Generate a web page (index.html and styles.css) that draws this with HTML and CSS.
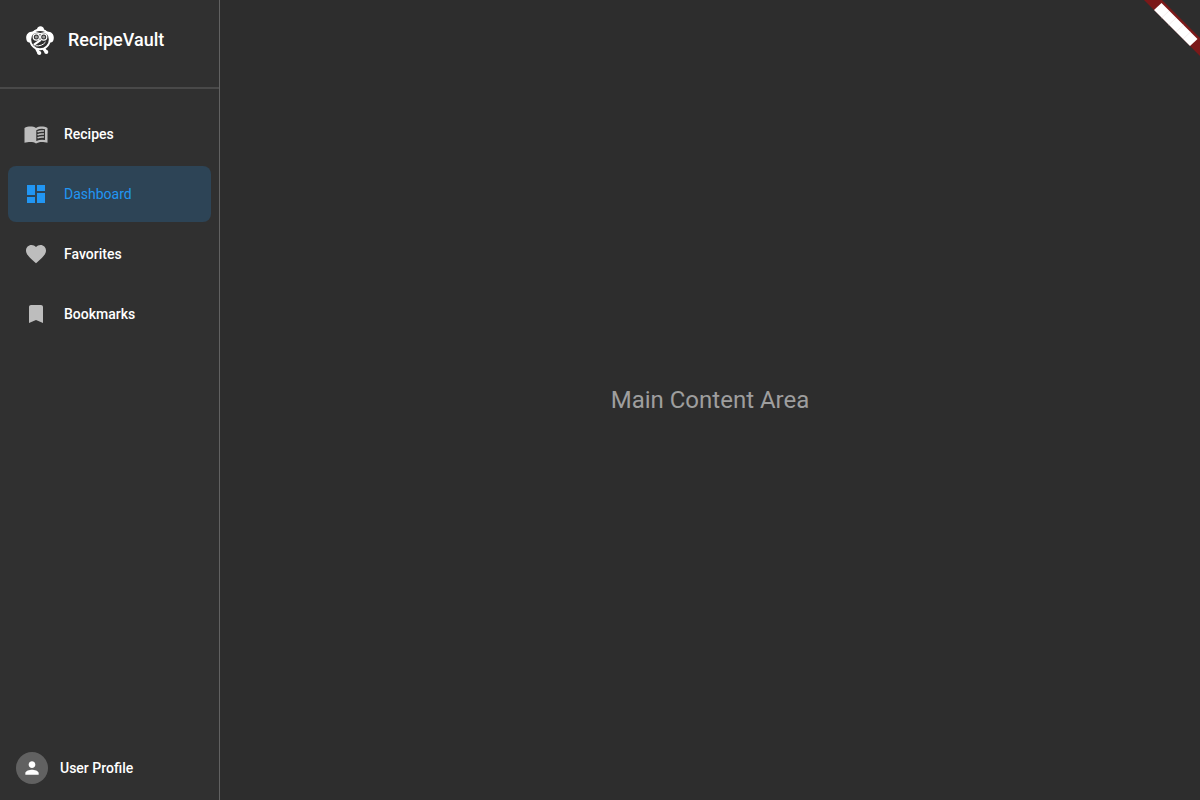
FILE: index.html
```html
<!DOCTYPE html>
<html lang="en">
<head>
<meta charset="utf-8">
<title>RecipeVault</title>
<link rel="stylesheet" href="styles.css">
</head>
<body>
<div class="app">
  <aside class="sidebar">
    <header class="brand">
      <svg class="brand-logo" viewBox="0 0 40 40" aria-hidden="true">
        <path d="M17 10C16.500 5 24.500 5 24 10L28.500 13.500H11.500z" fill="#fff"/>
        <path d="M14 11.500C9 11 6 14 6.200 18C6.400 22 8.500 23.500 12 22zM26 11.500C31 11 34 14 33.800 18C33.600 22 31.500 23.500 28 22z" fill="#fff"/>
        <circle cx="20" cy="19.500" r="9.800" fill="#303030" stroke="#fff" stroke-width="1.900"/>
        <path d="M11.500 14.500C13 10.500 16 9 20 9S27 10.500 28.500 14.500L24 13L20 14.500L16 13z" fill="#fff"/>
        <path d="M15.500 11.900Q20 10.300 25 11.900L20.300 13z" fill="#303030"/>
        <circle cx="16.300" cy="17" r="3.100" fill="#303030" stroke="#fff" stroke-width="1.200"/>
        <circle cx="23.700" cy="17" r="3.100" fill="#303030" stroke="#fff" stroke-width="1.200"/>
        <circle cx="16.300" cy="17" r="1.500" fill="#999"/>
        <circle cx="23.700" cy="17" r="1.500" fill="#999"/>
        <path d="M13.800 24.800L20.800 19.800" fill="none" stroke="#fff" stroke-width="2.200"/>
        <path d="M15.500 25.800Q22 26.500 25.500 22" fill="none" stroke="#fff" stroke-width="1"/>
        <path d="M16.500 28.500L19 33.200M23.500 28.500L26.500 32.300" stroke="#fff" stroke-width="3"/>
        <circle cx="19.300" cy="33" r="2" fill="#fff"/>
        <circle cx="26.300" cy="32" r="2" fill="#fff"/>
      </svg>
      <span class="brand-name">RecipeVault</span>
    </header>
    <nav class="nav">
      <a class="nav-item" href="#recipes">
        <svg class="icon" viewBox="0 0 24 24" aria-hidden="true">
          <path d="M12 6C10.550 4.900 8.450 4.500 6.500 4.500S2 4.900.5 6v14.800C2 20.300 4.500 20 6.500 20c1.950 0 4.050.4 5.500 1.500 1.350-.85 3.800-1.500 5.500-1.500 2 0 4.500.3 6 .8V6C22 4.900 19.450 4.500 17.500 4.500S13.450 4.900 12 6z"/>
          <path class="icon-page" d="M12.300 8.200Q16.500 6.200 21 7.200V18Q16.500 17 12.300 19z"/>
          <path class="icon-lines" d="M13.500 9.900Q16.500 8.500 20 9.100M13.500 12.900Q16.500 11.500 20 12.100M13.500 15.900Q16.500 14.500 20 15.100"/>
        </svg>
        <span>Recipes</span>
      </a>
      <a class="nav-item active" href="#dashboard" aria-current="page">
        <svg class="icon" viewBox="0 0 24 24" aria-hidden="true"><path d="M3 13h8V3H3v10zm0 8h8v-6H3v6zm10 0h8V11h-8v10zm0-18v6h8V3h-8z"/></svg>
        <span>Dashboard</span>
      </a>
      <a class="nav-item" href="#favorites">
        <svg class="icon" viewBox="0 0 24 24" aria-hidden="true"><path d="M12 21.350l-1.450-1.320C5.400 15.360 2 12.280 2 8.500 2 5.420 4.420 3 7.500 3c1.740 0 3.410.81 4.500 2.090C13.090 3.810 14.760 3 16.500 3 19.580 3 22 5.420 22 8.500c0 3.780-3.400 6.860-8.550 11.540L12 21.350z"/></svg>
        <span>Favorites</span>
      </a>
      <a class="nav-item" href="#bookmarks">
        <svg class="icon" viewBox="0 0 24 24" aria-hidden="true"><path d="M17 3H7c-1.100 0-1.990.9-1.990 2L5 21l7-3 7 3V5c0-1.100-.9-2-2-2z"/></svg>
        <span>Bookmarks</span>
      </a>
    </nav>
    <footer class="profile">
      <span class="avatar">
        <svg class="avatar-icon" viewBox="0 0 24 24" aria-hidden="true"><path d="M12 12c2.210 0 4-1.790 4-4s-1.790-4-4-4-4 1.790-4 4 1.790 4 4 4zm0 2c-2.670 0-8 1.340-8 4v2h16v-2c0-2.660-5.330-4-8-4z"/></svg>
      </span>
      <span>User Profile</span>
    </footer>
  </aside>
  <main class="content"><p class="placeholder">Main Content Area</p></main>
  <svg class="ribbon" viewBox="0 0 60 60" aria-hidden="true">
    <path d="M4 0H22L60 38V56z" fill="#7b1919"/>
    <path d="M21.500 3L57.500 39L50 46L14 10z" fill="#fff"/>
    <path d="M21.500 18L29 11M28.500 25L36 18M36 32L43.500 25M43 39L50.500 32" stroke="#eadede" stroke-width=".5"/>
  </svg>
</div>
</body>
</html>
```

FILE: styles.css
```css
* {
  box-sizing: border-box;
}

body {
  margin: 0;
  background: #2d2d2d;
  color: #fff;
  font-family: Roboto, "Liberation Sans", sans-serif;
}

.app {
  position: relative;
  display: flex;
  min-height: 100vh;
  overflow: hidden;
}

.sidebar {
  display: flex;
  flex-direction: column;
  flex: 0 0 220px;
  background: #303030;
  border-right: 1px solid #616161;
}

.brand {
  display: flex;
  align-items: center;
  gap: 8px;
  padding: 20px 20px 27px;
  border-bottom: 2px solid #494949;
}

.brand-logo {
  width: 40px;
  height: 40px;
}

.brand-name {
  font-size: 18px;
  font-weight: 500;
  line-height: 20px;
}

.nav {
  display: flex;
  flex: 1;
  flex-direction: column;
  gap: 4px;
  padding: 17px 8px;
}

.nav-item {
  display: flex;
  align-items: center;
  gap: 16px;
  min-height: 56px;
  padding: 0 16px;
  border-radius: 8px;
  color: #fff;
  font-size: 14px;
  font-weight: 500;
  text-decoration: none;
}

.icon {
  width: 24px;
  height: 24px;
  fill: #bdbdbd;
}

.icon .icon-page {
  fill: #303030;
}

.icon .icon-lines {
  fill: none;
  stroke: #bdbdbd;
  stroke-width: 1.5;
}

.active {
  background: #2d4456;
  color: #2196f3;
  font-weight: 400;
}

.active .icon {
  fill: #2196f3;
}

.profile {
  display: flex;
  align-items: center;
  gap: 12px;
  padding: 16px;
  font-size: 14px;
  font-weight: 500;
}

.avatar {
  display: grid;
  place-items: center;
  width: 32px;
  height: 32px;
  border-radius: 50%;
  background: #616161;
}

.avatar-icon {
  width: 20px;
  height: 20px;
  fill: #fff;
}

.content {
  display: grid;
  flex: 1;
  place-items: center;
}

.placeholder {
  margin: 0;
  color: #9e9e9e;
  font-size: 24px;
}

.ribbon {
  position: absolute;
  top: 0;
  right: 0;
  width: 60px;
  height: 60px;
}
```
